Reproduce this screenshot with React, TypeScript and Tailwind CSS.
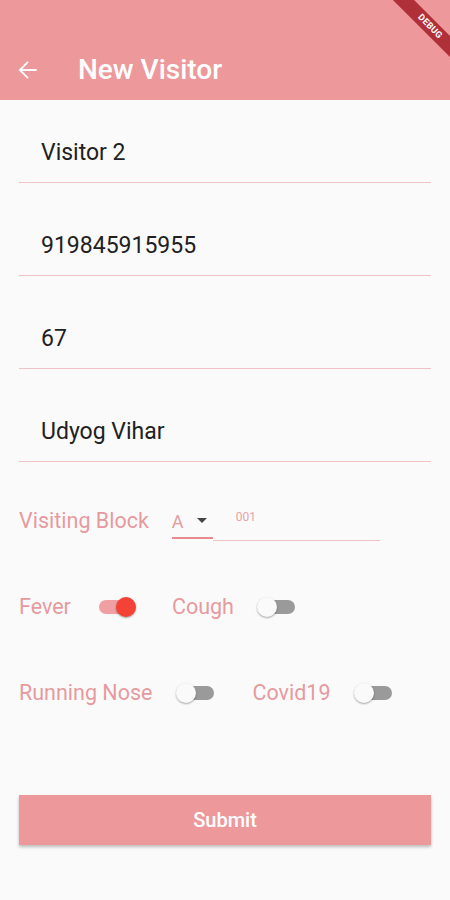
import React from "react";

function Switch({ on }: { on: boolean }) {
  return (
    <div className="relative w-[40px] h-[22px] shrink-0">
      <div
        className={
          "absolute left-[3px] top-[4px] w-[35px] h-[14px] rounded-full " +
          (on ? "bg-[#f0a0a2]" : "bg-[#9a9a9a]")
        }
      />
      <div
        className={
          "absolute top-[1px] w-[20px] h-[20px] rounded-full shadow-[0_1px_2px_rgba(0,0,0,0.35)] " +
          (on ? "right-0 bg-[#f44336]" : "left-0 bg-[#fafafa]")
        }
      />
    </div>
  );
}

function Field({ value }: { value: string }) {
  return (
    <div className="h-[61px] flex items-center pl-[22px] pt-[2px] border-b border-[#efc3c4] text-[23px] text-[#212121]">
      {value}
    </div>
  );
}

export default function App() {
  return (
    <div
      className="relative w-[450px] h-[900px] bg-[#fafafa] overflow-hidden"
      style={{ fontFamily: "Roboto, 'Noto Sans', sans-serif" }}
    >
      <div className="h-[100px] bg-[#ed999c] pt-[40px]">
        <div className="h-[60px] flex items-center">
          <svg
            className="ml-[15px]"
            width="26"
            height="26"
            viewBox="0 0 24 24"
            fill="none"
            stroke="#ffffff"
            strokeWidth="1.7"
          >
            <path d="M20 12H4.5M12 4.5L4.5 12 12 19.5" />
          </svg>
          <span className="ml-[37px] text-[28px] font-medium text-white">
            New Visitor
          </span>
        </div>
      </div>

      <div className="absolute top-[19px] right-[-40px] w-[120px] h-[15px] rotate-45 bg-[#b0303a] flex items-center justify-center">
        <span className="text-[9px] font-bold text-white tracking-[0.3px]">
          DEBUG
        </span>
      </div>

      <div className="px-[19px] pt-[22px] flex flex-col gap-[32px]">
        <Field value="Visitor 2" />
        <Field value="919845915955" />
        <Field value="67" />
        <Field value="Udyog Vihar" />
      </div>

      <div className="px-[19px] mt-[39px] flex flex-col">
        <div className="h-[40px] flex items-start text-[21.5px] text-[#e79a9e]">
          <div className="h-[40px] flex items-center">Visiting Block</div>
          <div className="ml-[23px] mt-[4px] w-[41px] h-[34px] flex items-center border-b-2 border-[#e88b8f]">
            <span className="text-[18px]">A</span>
            <svg className="ml-[13px]" width="10" height="6" viewBox="0 0 10 6">
              <path d="M0 0h10L5 5z" fill="#444444" />
            </svg>
          </div>
          <div className="w-[167px] h-[40px] border-b border-[#efc3c4] pl-[23px] pt-[8px] text-[12px] text-[#eaa3a6] leading-[16px]">
            001
          </div>
        </div>

        <div className="mt-[46px] h-[40px] flex items-center text-[21.5px] text-[#e79a9e]">
          <span>Fever</span>
          <div className="ml-[25px]">
            <Switch on={true} />
          </div>
          <span className="ml-[36px]">Cough</span>
          <div className="ml-[23px]">
            <Switch on={false} />
          </div>
        </div>

        <div className="mt-[46px] h-[40px] flex items-center text-[21.5px] text-[#e79a9e]">
          <span>Running Nose</span>
          <div className="ml-[24px]">
            <Switch on={false} />
          </div>
          <span className="ml-[36px]">Covid19</span>
          <div className="ml-[23px]">
            <Switch on={false} />
          </div>
        </div>

        <button className="mt-[82px] h-[50px] w-full bg-[#ed999c] text-white text-[20px] font-medium shadow-[0_2px_3px_rgba(0,0,0,0.25)]">
          Submit
        </button>
      </div>
    </div>
  );
}
